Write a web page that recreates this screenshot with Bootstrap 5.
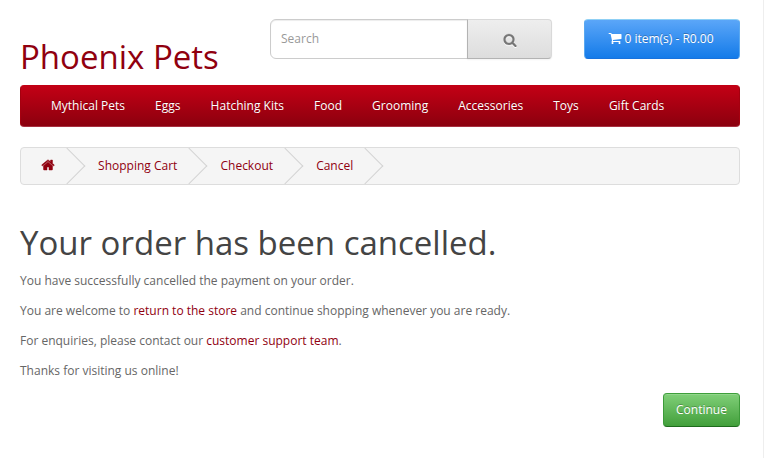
<!DOCTYPE html>
<html lang="en">
<head>
<meta charset="utf-8">
<meta name="viewport" content="width=device-width, initial-scale=1">
<title>Phoenix Pets</title>
<link href="https://cdn.jsdelivr.net/npm/bootstrap@5.3.0/dist/css/bootstrap.min.css" rel="stylesheet">
<style>
body{font:400 12px/20px "Open Sans",sans-serif;color:#666;background:#fff;overflow:hidden}
.page{height:458px;padding:19px 23px 0 20px;border-right:1px solid #eee}
a{color:#90000f;text-decoration:none}
h1{font-size:33px;line-height:36px;font-weight:400;color:#444}
.fa-i{width:14px;height:14px;fill:currentColor;display:block}
.brand{width:250px;padding-top:20px}
.brand h1 a{color:#90000f}
.finder{width:282px;height:40px}
.finder .form-control{font-size:12px;line-height:20px;padding:10px;border:1px solid #ccc;border-radius:6px 0 0 6px;box-shadow:inset 0 1px 1px rgba(0,0,0,.075)}
.finder .form-control::placeholder{color:#999;opacity:1}
.finder .btn{width:85px;border:1px solid #ddd;border-color:#d9d9d9 #d9d9d9 #b3b3b3 #b3b3b3;border-radius:0 4px 4px 0;background:linear-gradient(#eee,#ddd);color:#777;box-shadow:0 1px 2px rgba(0,0,0,.05)}
.finder .fa-i{filter:drop-shadow(0 1px 0 #fff);margin:2px 0 0;stroke:currentColor;stroke-width:30}
.btn-cart{width:156px;height:40px;margin-left:32px;font-size:12px;line-height:18px;color:#fff;border:1px solid;border-color:#8fd0f5 #5aa8f0 #1872dd #5aa8f0;border-radius:4px;background:linear-gradient(#5ba6f8,#147be9);text-shadow:0 -1px 0 rgba(0,0,0,.25)}
.btn-cart:hover{color:#fff}
.btn-cart .fa-i{margin:0 2px 2px -2px}
.menu{height:42px;margin-top:10px;padding:0 15px;border:1px solid;border-color:#c00014 #a5000f #a83040 #a5000f;border-radius:4px;background:linear-gradient(#c30015,#8b000e)}
.menu .nav{gap:.1px}
.menu .nav-link{padding:10px 15px;font-size:12px;line-height:20px;color:#fff;text-shadow:0 -1px 0 rgba(0,0,0,.25)}
.crumbs{height:38px;gap:3.1px;margin:20px 0 40px;padding:0;border:1px solid #ddd;border-radius:4px;background:#f5f5f5;overflow:hidden}
.crumbs li{position:relative;height:36px;padding:8px 20px;white-space:nowrap}
.crumbs li::after{content:"";position:absolute;top:5px;right:-5px;width:26px;height:26px;border-right:1px solid #d3d3d3;border-top:1px solid #d3d3d3;transform:rotate(45deg)}
.crumbs .fa-i{margin-top:2px;stroke:currentColor;stroke-width:60}
.btn-go{width:77px;height:34px;padding:6px 12px;font-size:12px;line-height:20px;color:#fff;border:1px solid;border-color:#3e9f3b #3c9b39 #1e6b1c #3c9b39;border-radius:4px;background:linear-gradient(#80cf78,#429f3b);text-shadow:0 -1px 0 rgba(0,0,0,.25);box-shadow:inset 0 1px 0 rgba(255,255,255,.15)}
.btn-go:hover{color:#fff}
.message h1{margin:0 0 10px}
.message p{margin:0 0 10px}
.actions{padding-top:2px}
</style>
</head>
<body>
<div class="page">
  <header class="d-flex align-items-start">
    <div class="brand"><h1 class="m-0"><a href="#">Phoenix Pets</a></h1></div>
    <div class="input-group finder flex-nowrap">
      <input type="text" class="form-control" placeholder="Search" aria-label="Search">
      <button class="btn d-flex align-items-center justify-content-center p-0" type="button" aria-label="Search">
        <svg class="fa-i" viewBox="0 0 1792 1792"><path d="M1216 832q0-185-131.500-316.500T768 384 451.500 515.500 320 832t131.500 316.500T768 1280t316.500-131.500T1216 832zm512 832q0 52-38 90t-90 38q-54 0-90-38l-343-342q-179 124-399 124-143 0-273.500-55.500t-225-150-150-225T64 832t55.500-273.500 150-225 225-150T768 128t273.500 55.500 225 150 150 225T1472 832q0 220-124 399l343 343q37 37 37 90z"/></svg>
      </button>
    </div>
    <button class="btn btn-cart d-flex align-items-center justify-content-center p-0" type="button">
      <svg class="fa-i flex-shrink-0" viewBox="0 0 1792 1792"><path d="M704 1536q0 52-38 90t-90 38-90-38-38-90 38-90 90-38 90 38 38 90zm896 0q0 52-38 90t-90 38-90-38-38-90 38-90 90-38 90 38 38 90zm128-1088v512q0 24-16.500 42.500t-40.500 21.500l-1044 122q13 60 13 70 0 16-24 64h920q26 0 45 19t19 45-19 45-45 19h-1024q-26 0-45-19t-19-45q0-11 8-31.500t16-36 21.500-40 15.500-29.500l-177-823h-204q-26 0-45-19t-19-45 19-45 45-19h256q16 0 28.500 6.500t19.500 15.500 13 24.500 8 26 5.500 29.500 4.500 26h1201q26 0 45 19t19 45z"/></svg><span>0 item(s) - R0.00</span>
    </button>
  </header>
  <nav class="menu">
    <ul class="nav flex-nowrap text-nowrap">
      <li><a class="nav-link" href="#">Mythical Pets</a></li>
      <li><a class="nav-link" href="#">Eggs</a></li>
      <li><a class="nav-link" href="#">Hatching Kits</a></li>
      <li><a class="nav-link" href="#">Food</a></li>
      <li><a class="nav-link" href="#">Grooming</a></li>
      <li><a class="nav-link" href="#">Accessories</a></li>
      <li><a class="nav-link" href="#">Toys</a></li>
      <li><a class="nav-link" href="#">Gift Cards</a></li>
    </ul>
  </nav>
  <ul class="crumbs d-flex list-unstyled">
    <li class="home"><a href="#" aria-label="Home"><svg class="fa-i" viewBox="0 0 1792 1792"><path d="M1472 992v480q0 26-19 45t-45 19h-384v-384h-256v384h-384q-26 0-45-19t-19-45v-480q0-1 .5-3t.5-3l575-474 575 474q1 2 1 6zm223-69l-62 74q-8 9-21 11h-3q-13 0-21-7l-692-577-692 577q-12 8-24 7-13-2-21-11l-62-74q-8-10-7-23.500t11-21.500l719-599q32-26 76-26t76 26l244 204v-195q0-14 9-23t23-9h192q14 0 23 9t9 23v408l219 182q10 8 11 21.500t-7 23.500z"/></svg></a></li>
    <li><a href="#">Shopping Cart</a></li>
    <li><a href="#">Checkout</a></li>
    <li><a href="#">Cancel</a></li>
  </ul>
  <main class="message">
    <h1>Your order has been cancelled.</h1>
    <p>You have successfully cancelled the payment on your order.</p>
    <p>You are welcome to <a href="#">return to the store</a> and continue shopping whenever you are ready.</p>
    <p>For enquiries, please contact our <a href="#">customer support team</a>.</p>
    <p>Thanks for visiting us online!</p>
    <div class="actions d-flex justify-content-end"><a class="btn btn-go" href="#">Continue</a></div>
  </main>
</div>
<script src="https://cdn.jsdelivr.net/npm/bootstrap@5.3.0/dist/js/bootstrap.bundle.min.js"></script>
</body>
</html>
